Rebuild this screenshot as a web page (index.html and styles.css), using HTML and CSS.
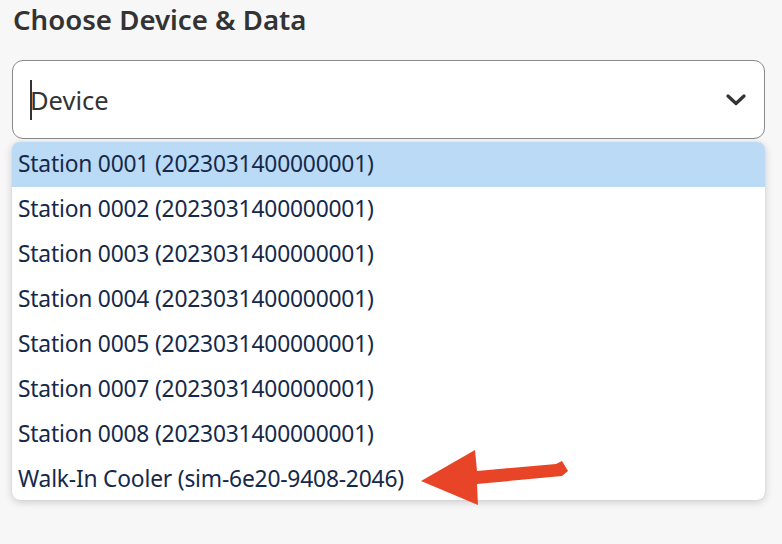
FILE: index.html
```html
<!DOCTYPE html>
<html lang="en">
<head>
<meta charset="utf-8">
<title>Choose Device &amp; Data</title>
<link rel="stylesheet" href="styles.css">
</head>
<body>
<main class="panel">
  <h2 class="title">Choose Device &amp; Data</h2>
  <div class="select">
    <div class="control">
      <span class="caret"></span>
      <span class="placeholder">Device</span>
      <svg class="chevron" width="20" height="12" viewBox="0 0 20 12"><path d="M2 2 L10 9.5 L18 2" fill="none" stroke="#333" stroke-width="3.2" stroke-linecap="round" stroke-linejoin="round"/></svg>
    </div>
    <ul class="menu">
      <li class="option active">Station 0001 (2023031400000001)</li>
      <li class="option">Station 0002 (2023031400000001)</li>
      <li class="option">Station 0003 (2023031400000001)</li>
      <li class="option">Station 0004 (2023031400000001)</li>
      <li class="option">Station 0005 (2023031400000001)</li>
      <li class="option">Station 0007 (2023031400000001)</li>
      <li class="option">Station 0008 (2023031400000001)</li>
      <li class="option">Walk-In Cooler (sim-6e20-9408-2046)</li>
    </ul>
    <svg class="arrow" width="782" height="544" viewBox="0 0 782 544"><path d="M421 481 L475 450 L477 471 L556 464 L562 461 L568 471 L562 476 L477 484 L478 505 Z" fill="#e84427"/></svg>
  </div>
</main>
</body>
</html>
```
FILE: styles.css
```css
html, body {
  margin: 0;
  padding: 0;
  background: #f7f7f7;
  width: 782px;
  height: 544px;
  overflow: hidden;
}
.panel {
  padding: 0 17px 0 12px;
  font-family: "Noto Sans", sans-serif;
}
.title {
  margin: 0;
  padding: 1px 0 0 1px;
  font-size: 27.6px;
  line-height: 37px;
  font-weight: 600;
  color: #333;
}
.select {
  margin-top: 22px;
}
.control {
  border: 1px solid #8a8a8a;
  border-radius: 11px;
  background: #fff;
  display: flex;
  align-items: center;
  padding: 0 18px 0 17px;
  box-sizing: border-box;
  height: 79px;
}
.caret {
  width: 2px;
  height: 40px;
  background: #333;
  margin-right: -2px;
}
.placeholder {
  flex: 1;
  font-size: 25.5px;
  color: #333;
}
.chevron {
  display: block;
}
.menu {
  list-style: none;
  margin: 3px 0 0;
  padding: 0;
  background: #fff;
  border-radius: 8px;
  overflow: hidden;
  box-shadow: 0 2px 8px rgba(0,0,0,0.18), 0 0 1px rgba(0,0,0,0.2);
  width: 753px;
}
.option {
  height: 45px;
  line-height: 43px;
  padding-left: 6px;
  font-size: 22.8px;
  color: #15294a;
  letter-spacing: -0.2px;
}
.option:last-child {
  height: 43px;
}
.option.active {
  background: #bbdaf5;
}
.arrow {
  position: absolute;
  left: 0;
  top: 0;
  pointer-events: none;
}
```
